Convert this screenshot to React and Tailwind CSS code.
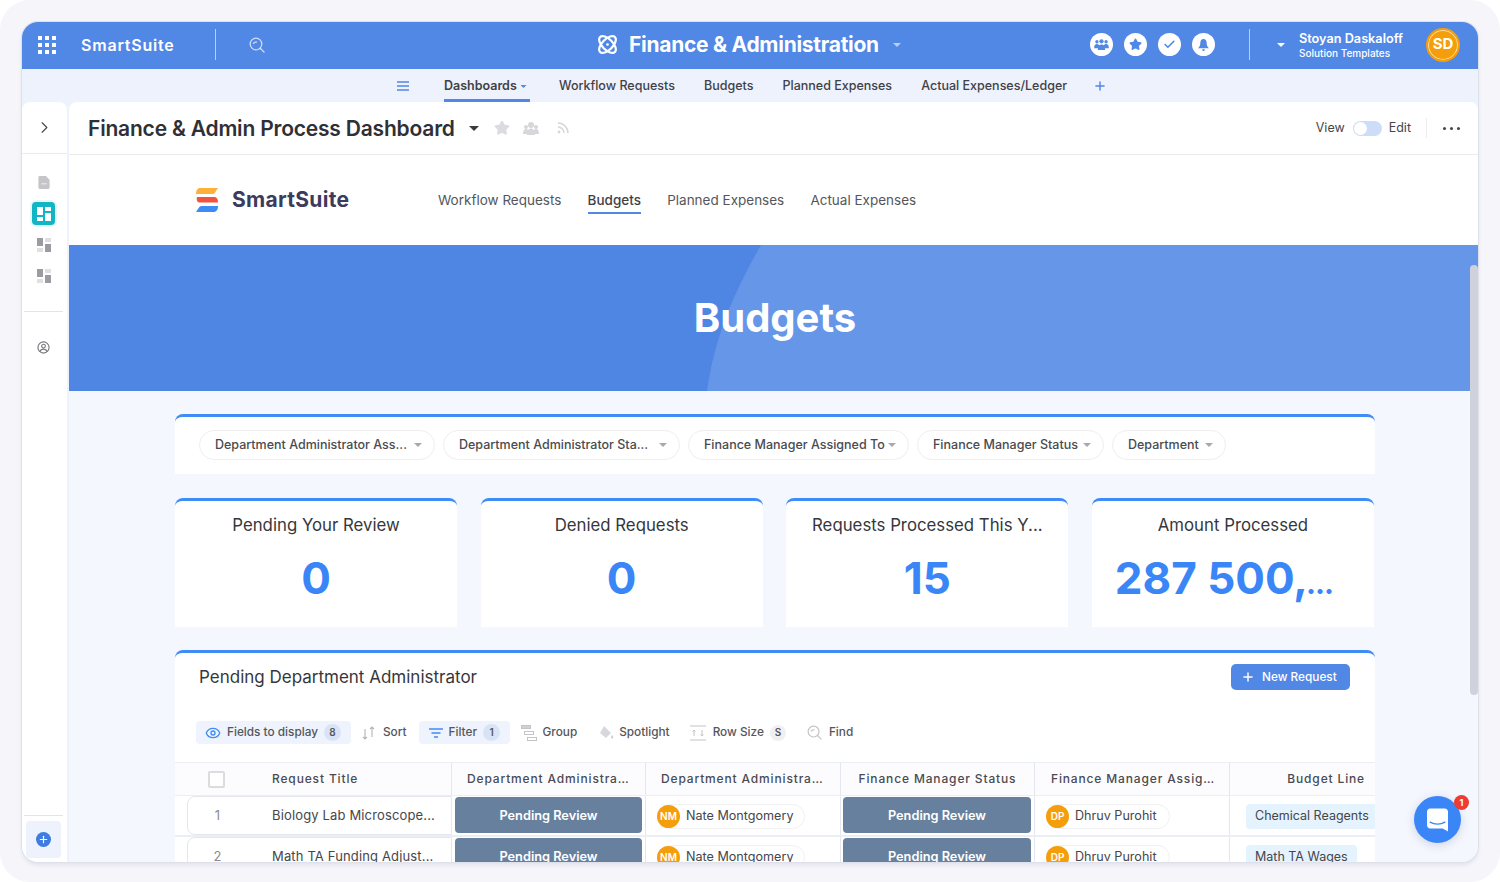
import { ChevronRight, Plus, Eye, Check, Star } from "lucide-react";

const tabs = ["Workflow Requests", "Budgets", "Planned Expenses", "Actual Expenses/Ledger"];
const filters = [
  ["Department Administrator Ass...", "w-[236px]"],
  ["Department Administrator Sta...", "w-[237px]"],
  ["Finance Manager Assigned To", "w-[221px]"],
  ["Finance Manager Status", "w-[187px]"],
  ["Department", "w-[114px]"],
];
const stats = [
  ["Pending Your Review", "0"],
  ["Denied Requests", "0"],
  ["Requests Processed This Y...", "15"],
  ["Amount Processed", "287 500,", "..."],
];
const rows = [
  ["1", "Biology Lab Microscope...", "Chemical Reagents"],
  ["2", "Math TA Funding Adjust...", "Math TA Wages"],
];

function Caret({ className }) {
  return (
    <svg viewBox="0 0 10 5" className={className} fill="currentColor">
      <path d="M0 0h10L5 5z" />
    </svg>
  );
}

function AppsGrid() {
  const dots = [0, 7, 14];
  return (
    <svg viewBox="0 0 18 18" className="h-[18px] w-[18px]" fill="#fff">
      {dots.map((y) => dots.map((x) => <rect key={`${x}-${y}`} x={x} y={y} width="4" height="4" />))}
    </svg>
  );
}

function SearchIcon({ className, stroke = "currentColor" }) {
  return (
    <svg viewBox="0 0 16 16" className={className} fill="none" stroke={stroke} strokeWidth="1.3" strokeLinecap="round">
      <circle cx="7" cy="7" r="5.8" />
      <path d="M11.2 11.2 15 15M4.5 6.5c.4-1.1 1.7-1.6 3-1.3" />
    </svg>
  );
}

function Atom() {
  return (
    <svg viewBox="0 0 22 22" className="h-[21px] w-[21px]" fill="none" stroke="#fff" strokeWidth="2.3">
      <ellipse cx="11" cy="11" rx="11" ry="5.6" transform="rotate(45 11 11)" />
      <ellipse cx="11" cy="11" rx="11" ry="5.6" transform="rotate(-45 11 11)" />
      <circle cx="11" cy="11" r="1.4" fill="#fff" stroke="none" />
    </svg>
  );
}

function LogoMark() {
  return (
    <svg viewBox="0 0 22 24" className="h-[24px] w-[22px]">
      <path d="M4 0h18l-3 4.5c-.7 1-1.6 1.5-3 1.5H0C0 2.5 1.500 0 4 0z" fill="#fdb03a" />
      <path d="M1 9h17c2.500 0 4 1.700 4 5.500H4C1.500 14.500 0 12.500 1 9z" fill="#f0533f" />
      <path d="M6 18h16c0 3.500-1.500 6-4.500 6H0l3-4.500c.7-1 1.600-1.500 3-1.500z" fill="#3d8bf5" />
    </svg>
  );
}

function Blocks() {
  return (
    <svg viewBox="0 0 14 14" className="h-[14px] w-[14px]">
      <rect x="0" y="0" width="6" height="8" fill="#9b9ba1" />
      <rect x="8" y="0" width="6" height="4" fill="#dfdfe3" />
      <rect x="0" y="10" width="6" height="4" fill="#dfdfe3" />
      <rect x="8" y="6" width="6" height="8" fill="#9b9ba1" />
    </svg>
  );
}

function HeaderCircle({ children }) {
  return (
    <div className="flex h-[23px] w-[23px] items-center justify-center rounded-full bg-white text-[#5187e5]">
      {children}
    </div>
  );
}

function Header() {
  return (
    <header className="flex h-[47px] shrink-0 items-center bg-[#5187e5] pb-[2px] text-white">
      <div className="flex w-[575px] shrink-0 items-center">
        <div className="ml-[16px]"><AppsGrid /></div>
        <span className="ml-[25px] w-[93px] text-[16px] font-semibold tracking-[0.8px] whitespace-nowrap">SmartSuite</span>
        <div className="ml-[41px] h-[31px] w-px bg-white/60" />
        <div className="ml-[33px] text-white/70"><SearchIcon className="h-[16px] w-[16px]" /></div>
      </div>
      <div className="flex items-center">
        <Atom />
        <span className="ml-[11px] text-[21px] leading-none font-bold tracking-[-0.28px]">Finance &amp; Administration</span>
        <Caret className="ml-[14px] h-[4px] w-[8px] text-white/60" />
      </div>
      <div className="ml-auto flex items-center pr-[18px]">
        <div className="flex gap-[11px]">
          <HeaderCircle>
            <svg viewBox="0 0 16 12" className="h-[11px] w-[15px]" fill="currentColor">
              <circle cx="3" cy="3" r="1.800" />
              <circle cx="13" cy="3" r="1.800" />
              <circle cx="8" cy="2.500" r="2.300" />
              <path d="M0 10c0-3 1-4.500 3-4.500S6 7 6 10zM10 10c0-3 1-4.500 3-4.500s3 1.500 3 4.500zM4 12c0-4 1.500-6 4-6s4 2 4 6z" />
            </svg>
          </HeaderCircle>
          <HeaderCircle><Star size={13} fill="currentColor" /></HeaderCircle>
          <HeaderCircle><Check size={13} strokeWidth={3} /></HeaderCircle>
          <HeaderCircle>
            <svg viewBox="0 0 12 13" className="h-[12px] w-[11px]" fill="currentColor">
              <path d="M6 0c2.500 0 3.500 2 3.500 4.500 0 2.500.8 3.700 2.500 5.500H0c1.700-1.800 2.500-3 2.500-5.500C2.500 2 3.500 0 6 0zM4.500 11h3c0 1.300-.7 2-1.500 2s-1.500-.7-1.500-2z" />
            </svg>
          </HeaderCircle>
        </div>
        <div className="ml-[34px] h-[31px] w-px bg-white/60" />
        <Caret className="ml-[27px] h-[4px] w-[8px] text-white" />
        <div className="ml-[14px] w-[127px] pt-[2px]">
          <div className="text-[12.7px] leading-[15px] font-semibold">Stoyan Daskaloff</div>
          <div className="text-[10px] leading-[15px] font-medium">Solution Templates</div>
        </div>
        <div className="flex h-[34px] w-[34px] items-center justify-center rounded-full border-2 border-[#f59e0b] bg-[#f59e0b] text-[15px] font-bold ring-1 ring-inset ring-white/70">
          SD
        </div>
      </div>
    </header>
  );
}

function SubNav() {
  return (
    <nav className="flex h-[33px] shrink-0 items-center bg-[#eef2fd] pl-[375px] text-[12.5px] font-medium text-[#3f4147]">
      <svg viewBox="0 0 12 10" className="h-[10px] w-[12px]" stroke="#5187e5" strokeWidth="1.500">
        <path d="M0 1h12M0 5h12M0 9h12" />
      </svg>
      <div className="ml-[35px] flex h-full w-[86px] items-center gap-[3px] border-b-[3px] border-[#5187e5] pt-[5px] font-semibold">
        Dashboards
        <Caret className="h-[3px] w-[7px] text-[#5187e5]" />
      </div>
      <div className="ml-[29px] flex gap-[29.100px] pt-[1px]">
        {tabs.map((t) => <span key={t}>{t}</span>)}
      </div>
      <Plus size={14} strokeWidth={2.500} className="ml-[26px] text-[#5187e5]" />
    </nav>
  );
}

function Sidebar() {
  return (
    <aside className="flex w-[45px] shrink-0 flex-col items-center rounded-t-[8px] bg-white pr-[2px]">
      <div className="-mr-[2px] flex h-[52px] shrink-0 items-center justify-center self-stretch border-b border-[#ececf0]">
        <ChevronRight size={19} strokeWidth={1.400} className="text-[#45464b]" />
      </div>
      <svg viewBox="0 0 12 14" className="mt-[22px] h-[13px] w-[12px]" fill="#c4c4c9">
        <path d="M1.500 0H8l4 4v8.500c0 .9-.6 1.500-1.500 1.500h-9C.6 14 0 13.400 0 12.500v-11C0 .6.600 0 1.500 0z" />
        <path d="M3 8h6v1H3z" fill="#fff" />
      </svg>
      <div className="mt-[11px] rounded-[6px] bg-[#e9f6f8] p-[2px]">
        <div className="flex h-[23px] w-[23px] items-center justify-center rounded-[4px] bg-[#12b5c4]">
          <svg viewBox="0 0 14 14" className="h-[14px] w-[14px]" fill="#fff">
            <rect width="6" height="8" />
            <rect x="8" width="6" height="4" />
            <rect y="10" width="6" height="4" />
            <rect x="8" y="6" width="6" height="8" />
          </svg>
        </div>
      </div>
      <div className="mt-[11px]"><Blocks /></div>
      <div className="mt-[17px]"><Blocks /></div>
      <div className="mt-[28px] h-px w-[39px] bg-[#e4e4e8]" />
      <svg viewBox="0 0 14 14" className="mt-[29px] h-[13px] w-[13px]" fill="none" stroke="#77777d" strokeWidth="1.200">
        <circle cx="7" cy="7" r="6" />
        <circle cx="7" cy="5.500" r="2" />
        <path d="M3.200 11.500c.7-2 2-2.700 3.800-2.700s3.100.7 3.800 2.700" />
      </svg>
      <div className="mt-auto h-px w-[39px] bg-[#e4e4e8]" />
      <div className="mt-[5px] mb-[4px] flex h-[37px] w-[35px] items-center justify-center rounded-[4px] bg-[#eef2fd]">
        <div className="flex h-[15px] w-[15px] items-center justify-center rounded-full bg-[#3f7ce0] text-white">
          <Plus size={11} strokeWidth={2.500} />
        </div>
      </div>
    </aside>
  );
}

function TitleBar() {
  return (
    <div className="flex h-[53px] shrink-0 items-center rounded-t-[8px] border-b border-[#ececf0] bg-white pl-[19px] pr-[18px]">
      <h1 className="text-[21px] leading-none font-semibold tracking-[-0.2px] text-[#2f3036]">Finance &amp; Admin Process Dashboard</h1>
      <Caret className="ml-[14px] h-[5px] w-[10px] text-[#3a3b40]" />
      <Star size={16} fill="#dcdce0" stroke="#dcdce0" className="ml-[15px]" />
      <svg viewBox="0 0 16 13" className="ml-[13px] h-[13px] w-[16px]" fill="#d6d6db">
        <circle cx="3" cy="5" r="2" />
        <circle cx="13" cy="5" r="2" />
        <circle cx="8" cy="3" r="3" />
        <path d="M0 12c0-3 1-5 3-5s3 2 3 5zM10 12c0-3 1-5 3-5s3 2 3 5zM4 13c0-4 1.500-6.500 4-6.500s4 2.500 4 6.500z" />
      </svg>
      <svg viewBox="0 0 12 12" className="ml-[18px] h-[12px] w-[12px]" fill="none" stroke="#d6d6db" strokeWidth="1.500">
        <path d="M1 1c5.500 0 10 4.500 10 10M1 5c3.300 0 6 2.700 6 6" />
        <circle cx="2" cy="10" r="1.400" fill="#d6d6db" stroke="none" />
      </svg>
      <div className="ml-auto flex items-center text-[12.5px] text-[#45464b]">
        <span className="pt-[1px]">View</span>
        <div className="ml-[8px] flex h-[15px] w-[29px] items-center rounded-full bg-[#cddcf8] pl-[1px]">
          <div className="h-[13px] w-[13px] rounded-full bg-white" />
        </div>
        <span className="ml-[7px] pt-[1px]">Edit</span>
        <div className="ml-[15px] h-[20px] w-px bg-[#ececf0]" />
        <div className="ml-[16px] flex gap-[4px]">
          <i className="h-[3px] w-[3px] rounded-full bg-[#45464b]" />
          <i className="h-[3px] w-[3px] rounded-full bg-[#45464b]" />
          <i className="h-[3px] w-[3px] rounded-full bg-[#45464b]" />
        </div>
      </div>
    </div>
  );
}

function LogoNav() {
  return (
    <div className="flex h-[90px] shrink-0 items-center bg-white pl-[127px] text-[13.5px] text-[#55565c]">
      <LogoMark />
      <span className="ml-[14px] w-[117px] text-[21px] font-bold tracking-[0.3px] whitespace-nowrap text-[#3b3b5e]">SmartSuite</span>
      <div className="ml-[89px] flex gap-[26.200px]">
        <span>Workflow Requests</span>
        <span className="-mb-[4px] border-b-2 border-[#5187e5] pb-[2px] font-medium text-[#3f4147]">Budgets</span>
        <span>Planned Expenses</span>
        <span>Actual Expenses</span>
      </div>
    </div>
  );
}

function Hero() {
  return (
    <div className="relative flex h-[146px] shrink-0 items-center justify-center bg-[#4f86e3] pl-[3px]">
      <svg viewBox="0 0 1409 146" className="absolute inset-0 h-full w-full">
        <path d="M692 0C668 42 646 88 638 146H1409V0z" fill="#6596e8" />
      </svg>
      <h2 className="relative text-[40px] font-bold text-white">Budgets</h2>
    </div>
  );
}

function StatCard({ label, value, more }) {
  return (
    <div className="flex h-[129px] flex-col items-center rounded-t-[8px] border-t-[3px] border-[#3f8cf7] bg-white px-[4px]">
      <div className="mt-[12px] text-[16.8px] leading-[24px] whitespace-nowrap text-[#36373c]">{label}</div>
      <div className="mt-[15px] text-[44px] leading-[52px] font-bold whitespace-nowrap text-[#3b86f7]">
        {value}
        {more && <span className="mr-[18px] -ml-[2px] text-[30px] tracking-[-1px]">{more}</span>}
      </div>
    </div>
  );
}

function Toolbar() {
  return (
    <div className="mt-[31px] flex h-[23px] items-center pl-[21px] text-[11.8px] font-medium text-[#55565c]">
      <div className="flex h-full w-[155px] items-center rounded-[4px] bg-[#eef3fd] pl-[9px]">
        <Eye size={16} className="text-[#3f8cf7]" />
        <span className="ml-[6px]">Fields to display</span>
        <span className="ml-[6px] flex h-[17px] w-[17px] items-center justify-center rounded-full bg-[#d9e3f6] text-[10px] font-semibold">8</span>
      </div>
      <div className="ml-[11px] flex items-center">
        <svg viewBox="0 0 14 14" className="h-[14px] w-[14px]" fill="none" stroke="#b5b5ba" strokeWidth="1.100">
          <path d="M3 3v10M1 11l2 2 2-2M10 11V1M8 3l2-2 2 2" />
        </svg>
        <span className="ml-[7px]">Sort</span>
      </div>
      <div className="ml-[12px] flex h-full w-[91px] items-center rounded-[4px] bg-[#eef3fd] pl-[10px]">
        <svg viewBox="0 0 14 10" className="h-[10px] w-[14px]" stroke="#3f8cf7" strokeWidth="1.500">
          <path d="M0 1h14M2.500 5h9M5 9h4" />
        </svg>
        <span className="ml-[6px]">Filter</span>
        <span className="ml-[6px] flex h-[17px] w-[17px] items-center justify-center rounded-full bg-[#d9e3f6] text-[10px] font-semibold">1</span>
      </div>
      <div className="ml-[11px] flex items-center">
        <svg viewBox="0 0 16 16" className="h-[16px] w-[16px]" fill="none" stroke="#c4c4c9" strokeWidth="1">
          <rect x="0.500" y="0.500" width="9" height="3" fill="#d0d0d5" />
          <rect x="3.500" y="6.500" width="9" height="3" />
          <rect x="6.500" y="12.500" width="9" height="3" />
        </svg>
        <span className="ml-[6px]">Group</span>
      </div>
      <div className="ml-[21px] flex items-center">
        <svg viewBox="0 0 16 16" className="h-[16px] w-[16px]">
          <path d="M6 1l7 7-5 5-6-5z" fill="#d8d8dc" />
          <path d="M14 10c1 1.500 1.500 2.500.8 3.200-.7.500-1.600 0-1.600-1 0-.7.300-1.400.8-2.200z" fill="#c4c4c9" />
        </svg>
        <span className="ml-[5px]">Spotlight</span>
      </div>
      <div className="ml-[20px] flex items-center">
        <svg viewBox="0 0 16 16" className="h-[16px] w-[16px]" fill="none" stroke="#c4c4c9" strokeWidth="1">
          <path d="M0 1h16M0 15h16M4 11V5M2.500 6.500 4 5l1.500 1.500M12 5v6M10.500 9.500 12 11l1.500-1.500" />
        </svg>
        <span className="ml-[7px]">Row Size</span>
        <span className="ml-[6px] flex h-[16px] w-[16px] items-center justify-center rounded-full bg-[#f0f0f3] text-[10px] font-semibold">S</span>
      </div>
      <div className="ml-[21px] flex items-center">
        <SearchIcon className="h-[15px] w-[15px]" stroke="#c4c4c9" />
        <span className="ml-[7px]">Find</span>
      </div>
    </div>
  );
}

function Person({ initials, name, width }) {
  return (
    <div className={`flex h-[25px] items-center rounded-full border border-[#f1f1f4] ${width}`}>
      <span className="-ml-px flex h-[23px] w-[23px] shrink-0 items-center justify-center rounded-full bg-[#f59e0b] text-[10px] font-semibold text-white">
        {initials}
      </span>
      <span className="ml-[6px] text-[12.6px] whitespace-nowrap text-[#45464b]">{name}</span>
    </div>
  );
}

function Status() {
  return (
    <div className="flex h-[36px] items-center justify-center rounded-[4px] bg-[#67809e] pt-[1px] text-[12.75px] font-semibold text-white">
      Pending Review
    </div>
  );
}

function Table() {
  const cols = "grid grid-cols-[277px_194px_195px_194px_195px_145px]";
  const head = "flex h-full items-center border-r border-[#e4e6f0] text-[12px] font-medium tracking-[0.85px] whitespace-nowrap text-[#4a4b50]";
  return (
    <div className="mt-[18px]">
      <div className={`${cols} h-[34px] border-y border-[#eceef5] bg-[#fcfcff]`}>
        <div className={`${head} pl-[33px]`}>
          <span className="h-[17px] w-[17px] rounded-[2px] border-2 border-[#dcdce0] bg-white" />
          <span className="ml-[47px]">Request Title</span>
        </div>
        <div className={`${head} pl-[15px]`}>Department Administra…</div>
        <div className={`${head} pl-[15px]`}>Department Administra…</div>
        <div className={`${head} justify-center`}>Finance Manager Status</div>
        <div className={`${head} pl-[16px]`}>Finance Manager Assig…</div>
        <div className={`${head} justify-end border-r-0 pr-[10px]`}>Budget Line</div>
      </div>
      {rows.map(([num, title, budget]) => (
        <div key={num} className={`${cols} h-[41px] border-b-2 border-[#eceef5]`}>
          <div className="ml-[12px] flex items-center rounded-l-[8px] border border-[#e4e6f0] pt-[1px] text-[13px] tracking-[0.15px] text-[#45464b]">
            <span className="w-[59px] text-center text-[#8a8b90]">{num}</span>
            <span className="ml-[25px] whitespace-nowrap">{title}</span>
          </div>
          <div className="border-r border-[#e4e6f0] pt-[1px] pl-[3px] pr-[3px]"><Status /></div>
          <div className="flex items-center border-r border-[#e4e6f0] pl-[11px] pt-[1px]">
            <Person initials="NM" name="Nate Montgomery" width="w-[148px]" />
          </div>
          <div className="border-r border-[#e4e6f0] pt-[1px] pl-[2px] pr-[3px]"><Status /></div>
          <div className="flex items-center border-r border-[#e4e6f0] pl-[11px] pt-[1px]">
            <Person initials="DP" name="Dhruv Purohit" width="w-[124px]" />
          </div>
          <div className="flex items-center pl-[16px] pt-[1px]">
            <span className="flex h-[25px] items-center rounded-[4px] bg-[#e4f3fd] px-[9px] text-[12.5px] whitespace-nowrap text-[#45464b]">{budget}</span>
          </div>
        </div>
      ))}
    </div>
  );
}

function Dashboard() {
  return (
    <div className="flex-1 bg-[#f4f7fe] pl-[106px] pr-[103px] pt-[23px]">
      <div className="flex h-[60px] items-start gap-[8px] rounded-t-[8px] border-t-[3px] border-[#3f8cf7] bg-white pl-[24px] pt-[13px]">
        {filters.map(([label, width]) => (
          <div key={label} className={`flex h-[30px] items-center justify-between rounded-full border border-[#f0eef0] pl-[15px] pr-[12px] text-[12.5px] font-medium whitespace-nowrap text-[#4a4b50] ${width}`}>
            <span className="pt-[1px]">{label}</span>
            <Caret className="h-[4px] w-[8px] text-[#a8a8ad]" />
          </div>
        ))}
      </div>
      <div className="mt-[24px] grid grid-cols-4 gap-[23.600px] pr-[1px]">
        {stats.map(([label, value, more]) => <StatCard key={label} label={label} value={value} more={more} />)}
      </div>
      <div className="mt-[23px] overflow-hidden rounded-t-[8px] border-t-[3px] border-[#3f8cf7] bg-white pt-[11px]">
        <div className="flex h-[26px] items-center justify-between pl-[24px] pr-[25px]">
          <div className="pt-[1px] text-[17px] text-[#36373c]">Pending Department Administrator</div>
          <button className="flex h-[26px] w-[119px] items-center rounded-[5px] bg-[#5187e5] pl-[10px] text-[11.8px] font-medium text-white">
            <Plus size={14} strokeWidth={2.500} />
            <span className="ml-[7px] pt-[1px]">New Request</span>
          </button>
        </div>
        <Toolbar />
        <Table />
      </div>
    </div>
  );
}

export default function App() {
  return (
    <div className="h-[882px] w-[1500px] overflow-hidden bg-white font-['Inter',sans-serif]">
      <div className="h-full rounded-[30px] bg-[#f5f5fa] px-[22px] pt-[22px]">
        <div className="relative flex h-[840px] w-[1456px] flex-col overflow-hidden rounded-[16px] bg-[#eef2fd] shadow-[0_0_0_1px_#dfe1ea,0_3px_4px_#dfe1ea]">
          <Header />
          <SubNav />
          <div className="flex min-h-0 flex-1 gap-[2px]">
            <Sidebar />
            <main className="flex min-w-0 flex-1 flex-col overflow-hidden">
              <TitleBar />
              <LogoNav />
              <Hero />
              <Dashboard />
            </main>
          </div>
          {/* overlay scrollbar and chat launcher */}
          <div className="absolute top-[243px] right-0 h-[430px] w-[8px] rounded-full bg-[#cfd1dc]" />
          <div className="absolute right-[17px] bottom-[19px] flex h-[47px] w-[47px] items-center justify-center rounded-full bg-[#3b86f7] shadow-[0_2px_10px_rgba(60,70,110,0.2)]">
            <svg viewBox="0 0 20 22" className="h-[24px] w-[21px]">
              <path d="M3 0h14c1.700 0 3 1.300 3 3v19l-5-3H3c-1.700 0-3-1.300-3-3V3C0 1.300 1.300 0 3 0z" fill="#fff" />
              <path d="M3 13c4 2.500 10 2.500 14 0" fill="none" stroke="#3b86f7" strokeWidth="1.200" strokeLinecap="round" />
            </svg>
            <span className="absolute -top-[1px] -right-[8px] flex h-[15px] w-[15px] items-center justify-center rounded-full bg-[#ee3b33] text-[9px] font-bold text-white">1</span>
          </div>
        </div>
      </div>
    </div>
  );
}
